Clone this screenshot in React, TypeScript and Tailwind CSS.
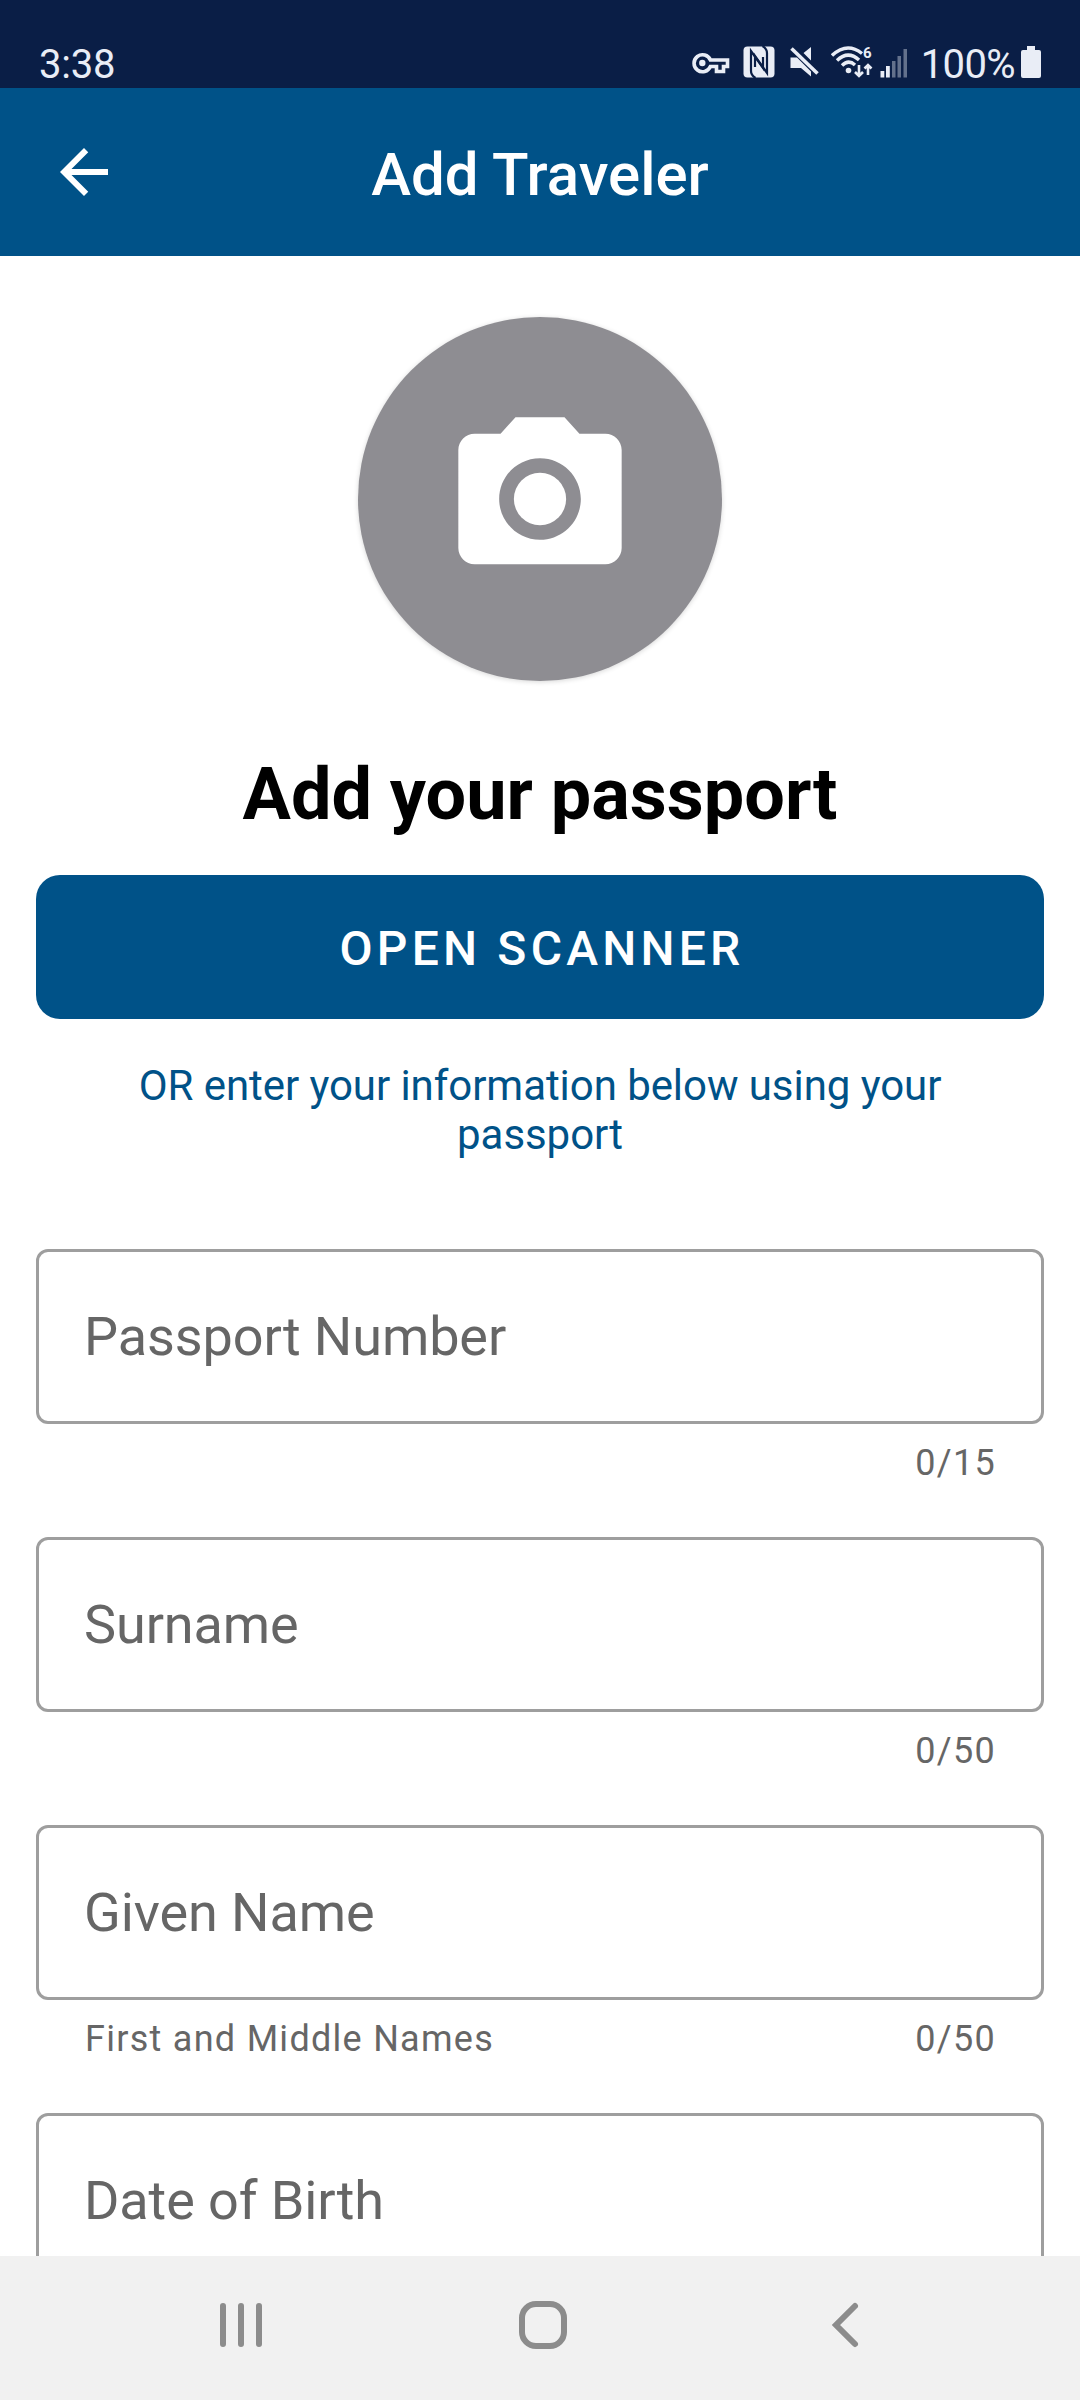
import type { ReactNode } from 'react';

type Field = { label: string; counter: string; helper?: string };

const FIELDS: Field[] = [
  { label: 'Passport Number', counter: '0/15' },
  { label: 'Surname', counter: '0/50' },
  { label: 'Given Name', counter: '0/50', helper: 'First and Middle Names' },
  { label: 'Date of Birth', counter: '' },
];

/** Status bar: clock on the left, system icons and battery on the right. */
function StatusBar() {
  return (
    <div className="flex h-[88px] shrink-0 items-end justify-between bg-[#0a1e46] pr-[39px] pb-[10px] pl-[39px] text-[#e9edf6]">
      <span className="mb-[-10px] text-[40px] leading-[47px] tracking-[-0.2px]">3:38</span>
      <div className="flex items-end">
        {/* vpn key */}
        <svg className="mr-[13px] mb-[4px] h-[22px] w-[38px]" viewBox="0 0 38 22" fill="none">
          <path
            d="M18.4 8H35.5v6.5H31.5V19.5H24.5V14.5H18.4A8.5 8.5 0 1 1 18.4 8Z"
            stroke="currentColor"
            strokeWidth="3.6"
          />
          <circle cx="10.3" cy="11" r="3.2" fill="currentColor" />
        </svg>
        {/* nfc */}
        <svg className="mr-[15px] h-[32px] w-[32px]" viewBox="0 0 32 32" fill="none">
          <rect x="0.5" y="0.5" width="31" height="31" rx="4" fill="currentColor" />
          <g stroke="#0a1e46" strokeWidth="2.2">
            <path d="M12.500 32Q8 29 8 25V5L20 22V11" />
            <path d="M19.500 0Q24 3 24 7V27L12 10V21" />
          </g>
        </svg>
        {/* muted speaker */}
        <svg className="mr-[12px] mb-px h-[31px] w-[29px]" viewBox="0 0 29 31">
          <path d="M0.5 11.500H7L21 25.500V30.500L11 22H0.5ZM21 1V14.500L13.500 7Z" fill="currentColor" />
          <path d="M1.500 2.500L27.500 27.500" stroke="currentColor" strokeWidth="3.600" />
        </svg>
        {/* wifi 6 */}
        <div className="relative mr-[7px] h-[32px] w-[42px]">
          <svg className="h-[32px] w-[42px]" viewBox="0 0 42 32" fill="none">
            <g stroke="currentColor" strokeWidth="3.400">
              <path d="M1 9.500Q16 -4.500 31 7.500" />
              <path d="M6 14.500Q17 4 28 14" />
              <path d="M11 19.500Q17.500 13 24 19" />
            </g>
            <circle cx="17.500" cy="24.500" r="2.800" fill="currentColor" />
            <path d="M28 19V30M24 26L28 30L32 26M37 29V19M33.500 22.500L37 19L40.500 22.500" stroke="currentColor" strokeWidth="2.600" />
          </svg>
          <span className="absolute top-0 right-[1px] text-[15px] leading-[15px] font-bold">6</span>
        </div>
        {/* signal strength */}
        <svg className="mr-[13px] h-[30px] w-[28px]" viewBox="0 0 28 30" fill="currentColor">
          <rect x="0.500" y="23" width="3.800" height="6.500" />
          <rect x="6" y="18" width="3.800" height="11.500" />
          <g opacity="0.4">
            <rect x="12" y="13" width="3.500" height="16.500" />
            <rect x="17.500" y="8" width="3.500" height="21.500" />
            <rect x="23.500" y="1" width="3.500" height="28.500" />
          </g>
        </svg>
        <span className="mr-[6px] mb-[-10px] text-[40px] leading-[47px] tracking-[-0.6px]">100%</span>
        <svg className="h-[32px] w-[20px]" viewBox="0 0 20 32" fill="currentColor">
          <path d="M6 0H14V4H18Q20 4 20 6V30Q20 32 18 32H2Q0 32 0 30V6Q0 4 2 4H6Z" />
        </svg>
      </div>
    </div>
  );
}

function AppBar({ title }: { title: string }) {
  return (
    <header className="grid h-[168px] shrink-0 grid-cols-[168px_1fr_168px] items-center bg-[#005288] text-white">
      <button className="flex justify-center" aria-label="Back">
        <svg className="h-[72px] w-[72px]" viewBox="0 0 24 24" fill="currentColor">
          <path d="M20 11H7.830l5.590-5.590L12 4l-8 8 8 8 1.410-1.410L7.830 13H20v-2z" />
        </svg>
      </button>
      <h1 className="pt-[5px] text-center text-[60px] leading-[70px] font-medium">{title}</h1>
    </header>
  );
}

/** Outlined text field with the helper and counter line underneath. */
function OutlinedField({ label, counter, helper }: Field) {
  return (
    <div className="h-[288px] shrink-0">
      <div className="flex h-[175px] items-center rounded-[12px] border-3 border-[#9e9e9e] pl-[45px] text-[54px] leading-[64px] tracking-[-0.1px]">
        {label}
      </div>
      <div className="mt-[18px] flex justify-between pr-[48px] pl-[49px] text-[36px] leading-[42px] tracking-[1.28px]">
        <span>{helper}</span>
        <span>{counter}</span>
      </div>
    </div>
  );
}

function NavButton({ label, children }: { label: string; children: ReactNode }) {
  return (
    <button aria-label={label} className="flex h-[60px] w-[60px] items-center justify-center">
      {children}
    </button>
  );
}

function NavBar() {
  return (
    <nav className="flex h-[144px] shrink-0 items-center justify-between bg-[#f1f1f1] pr-[205px] pb-[6px] pl-[211px] text-[#8c8c8c]">
      <NavButton label="Recents">
        <svg className="h-[60px] w-[60px]" viewBox="0 0 60 60" stroke="currentColor" strokeWidth="6" strokeLinecap="round">
          <path d="M12 11V49M30 11V49M48 11V49" />
        </svg>
      </NavButton>
      <NavButton label="Home">
        <svg className="h-[60px] w-[60px]" viewBox="0 0 60 60" fill="none" stroke="currentColor" strokeWidth="6">
          <rect x="9" y="9" width="42" height="42" rx="14" />
        </svg>
      </NavButton>
      <NavButton label="Back">
        <svg className="h-[60px] w-[60px]" viewBox="0 0 60 60" fill="none" stroke="currentColor" strokeWidth="6" strokeLinecap="round">
          <path d="M40 11L21 30L40 49" />
        </svg>
      </NavButton>
    </nav>
  );
}

export default function App() {
  return (
    <div className="flex h-[2400px] w-[1080px] flex-col overflow-hidden bg-white font-[Roboto,sans-serif]">
      <StatusBar />
      <AppBar title="Add Traveler" />

      <main className="flex min-h-0 flex-1 flex-col overflow-hidden px-[36px] pt-[61px]">
        <div className="flex h-[364px] w-[364px] shrink-0 items-center justify-center self-center rounded-full bg-[#8e8d92] shadow-[0_1px_5px_rgba(0,0,0,0.16)]">
          <svg className="h-[196px] w-[196px] text-white" viewBox="0 0 24 24" fill="currentColor">
            <circle cx="12" cy="12" r="3.200" />
            <path d="M9 2L7.170 4H4c-1.100 0-2 .9-2 2v12c0 1.100.9 2 2 2h16c1.100 0 2-.9 2-2V6c0-1.100-.9-2-2-2h-3.170L15 2H9zm3 15c-2.760 0-5-2.240-5-5s2.240-5 5-5 5 2.240 5 5-2.240 5-5 5z" />
          </svg>
        </div>

        <h2 className="mt-[72px] text-center text-[72px] leading-[84px] font-bold text-black">Add your passport</h2>

        <button className="mt-[38px] h-[144px] shrink-0 rounded-[24px] bg-[#005288] pt-[3px] pl-[4px] text-[48px] font-medium tracking-[4.2px] text-white">
          OPEN SCANNER
        </button>

        <p className="mx-auto mt-[42px] w-[860px] text-center text-[42px] leading-[49px] tracking-[-0.06px] text-[#005288]">
          OR enter your information below using your passport
        </p>

        <div className="mt-[90px] flex flex-col text-[#666666]">
          {FIELDS.map((field) => (
            <OutlinedField key={field.label} {...field} />
          ))}
        </div>
      </main>

      <NavBar />
    </div>
  );
}
